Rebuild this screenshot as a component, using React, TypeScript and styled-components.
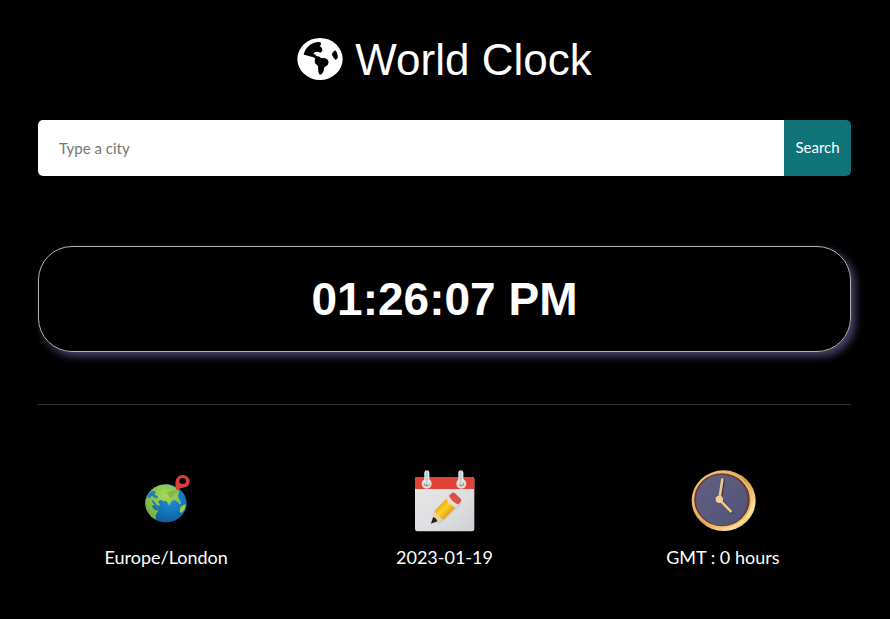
import React, { FormEvent, useState } from "react";
import styled, { createGlobalStyle } from "styled-components";

const GlobalStyle = createGlobalStyle`
  *, *::before, *::after { box-sizing: border-box; }
  body { margin: 0; background: #000; color: #fff; font-family: Lato, sans-serif; }
`;

const Page = styled.main`
  display: flex;
  flex-direction: column;
  padding: 32px 39px 48px 38px;
`;

const Header = styled.header`
  display: flex;
  align-items: center;
  justify-content: center;
  gap: 12px;
  height: 56px;
`;

const GlobeIcon = styled.svg`
  width: 46px;
  height: 42px;
  margin-bottom: 2px;
`;

const Title = styled.h1`
  margin: 0;
  font: 400 44px/56px Arial, "Liberation Sans", sans-serif;
`;

const SearchForm = styled.form`
  display: flex;
  height: 56px;
  margin-top: 32px;
  border-radius: 5px;
  overflow: hidden;
`;

const CityInput = styled.input`
  flex: 1;
  min-width: 0;
  padding: 0 21px;
  border: 0;
  outline: 0;
  background: #fff;
  color: #222;
  font: 400 15px Lato, sans-serif;
  &::placeholder { color: #757575; opacity: 1; }
`;

const SearchButton = styled.button`
  width: 67px;
  padding: 0 0 2px;
  border: 0;
  background: #0f7377;
  color: #fff;
  font: 400 15px Lato, sans-serif;
  cursor: pointer;
`;

const ClockPanel = styled.section`
  display: grid;
  place-items: center;
  height: 106px;
  margin-top: 70px;
  border: 1px solid #b4b4b8;
  border-radius: 34px;
  box-shadow: 4px 4px 8px #4a4870;
`;

const Time = styled.time`
  font: 700 46px/56px Arial, "Liberation Sans", sans-serif;
`;

const Divider = styled.hr`
  width: 100%;
  height: 1px;
  margin: 52px 0 0;
  border: 0;
  background: #303030;
`;

const Details = styled.section`
  display: grid;
  grid-template-columns: repeat(3, 1fr);
  gap: 22px;
  margin-top: 64px;
`;

const Detail = styled.div`
  display: flex;
  flex-direction: column;
  align-items: center;
  gap: 12px;
`;

const Picture = styled.svg`
  width: 70px;
  height: 64px;
`;

const Label = styled.p`
  margin: 0;
  font-size: 18px;
  line-height: 24px;
  white-space: nowrap;
`;

function WorldPicture() {
  return (
    <Picture viewBox="3 27 210 192" aria-hidden="true">
      <defs>
        <radialGradient id="ocean" cx="60%" cy="40%" r="65%">
          <stop offset="0" stopColor="#2190d8" />
          <stop offset="1" stopColor="#0d5c9c" />
        </radialGradient>
        <radialGradient id="land" cx="60%" cy="30%" r="75%">
          <stop offset="0" stopColor="#a8d85a" />
          <stop offset="1" stopColor="#6fae41" />
        </radialGradient>
        <clipPath id="world"><ellipse cx="108" cy="130" rx="62" ry="57" /></clipPath>
      </defs>
      <ellipse cx="108" cy="130" rx="62" ry="57" fill="url(#ocean)" />
      <g clipPath="url(#world)">
        <path fill="url(#land)" d="M66 84 90 74 115 73 138 83 148 94 144 108 149 122 142 127 134 119 124 124 119 137 108 122 99 124 94 119 84 124 90 135 82 145 78 139 70 134 66 140 76 151 85 151 77 166 77 181 62 183 43 151 43 108Z" />
        <path fill="#2580b7" d="m54 103 12-11 13 3-5 9 10 5-2 7-9-3-7-6-7 8-6-2z" />
        <path fill="#1d77b4" d="m66 119 8 8 7 8 8 2-6 6-9-8-9-11z" />
        <path fill="#9ccc4d" d="m76 95 5-3 2 8-5 3zM151 142l9-7 8-2-5 17-9 9-5-4zM148 119l5 9-4 6-4-8z" />
        <path fill="#72ad40" d="m110 98 18-7 15 3-10 8-7 13-8-4z" opacity=".6" />
      </g>
      <path fill="#d93e36" fillRule="evenodd" d="M139 91C136 78 135 66 138 59A21 19 0 1 1 166 82Q151 84 139 91Zm9-28a10 9 0 1 0 20 0 10 9 0 0 0-20 0Z" />
    </Picture>
  );
}

function CalendarPicture() {
  return (
    <Picture viewBox="27 28 210 192" aria-hidden="true">
      <defs>
        <linearGradient id="paper" x2="1" y2="1"><stop stopColor="#e7e7e8" /><stop offset=".6" stopColor="#dedfe1" /><stop offset="1" stopColor="#cecfd2" /></linearGradient>
        <linearGradient id="ring"><stop stopColor="#f6f7f8" /><stop offset=".5" stopColor="#b9c3c9" /><stop offset="1" stopColor="#fff" /></linearGradient>
        <linearGradient id="pencil"><stop stopColor="#f2a90c" /><stop offset=".4" stopColor="#ffd326" /><stop offset="1" stopColor="#e4a111" /></linearGradient>
      </defs>
      <rect x="45" y="52" width="178" height="163" rx="7" fill="url(#paper)" />
      <path fill="#e04336" d="M45 88V59q0-7 7-7h164q7 0 7 7v29z" />
      <g fill="#e4d9d8"><circle cx="80" cy="72" r="15" /><circle cx="184" cy="72" r="15" /></g>
      <g fill="#8e9297"><circle cx="80" cy="72" r="8" /><circle cx="184" cy="72" r="8" /></g>
      <g fill="url(#ring)"><rect x="73" y="32" width="15" height="44" rx="7" /><rect x="175" y="32" width="15" height="44" rx="7" /></g>
      <path d="m100 190 78-61 8 5-65 59z" fill="#b8b9bc" opacity=".35" />
      <g transform="translate(174 108) rotate(44)">
        <path fill="url(#pencil)" d="M-19 30h38v52l-19 28-19-28z" />
        <path fill="#ead0a9" d="m-19 80 10 5 9-3 9 3 10-5-8 18-11 17-11-17z" />
        <path fill="#242220" d="M-9 98Q0 93 9 98L0 117Z" />
        <rect x="-19" y="1" width="38" height="24" rx="9" fill="#df4e49" />
        <path fill="#dedfe1" d="M-19 19Q0 27 19 19v12Q0 38-19 31z" />
      </g>
    </Picture>
  );
}

function ClockPicture() {
  return (
    <Picture viewBox="24 27 210 192" aria-hidden="true">
      <defs>
        <linearGradient id="gold" x2="1" y2="1"><stop stopColor="#ffdd83" /><stop offset=".5" stopColor="#d99a45" /><stop offset=".8" stopColor="#ffe29a" /><stop offset="1" stopColor="#c3843e" /></linearGradient>
        <linearGradient id="face" x2="1" y2="1"><stop stopColor="#626084" /><stop offset="1" stopColor="#505377" /></linearGradient>
      </defs>
      <ellipse cx="131" cy="122" rx="96" ry="91" fill="url(#gold)" />
      <ellipse cx="126" cy="119" rx="86" ry="82" fill="#663d39" stroke="#efbd70" strokeWidth="5" />
      <ellipse cx="125" cy="120" rx="77" ry="76" fill="url(#face)" />
      <path d="M121 119 130 61M121 119 153 156" stroke="#443247" strokeWidth="10" strokeLinecap="round" />
      <path d="M118 118 127 59M118 118 152 154" stroke="#efc889" strokeWidth="8" strokeLinecap="round" />
      <circle cx="118" cy="118" r="11" fill="#f5cf94" />
    </Picture>
  );
}

export default function App() {
  const [city, setCity] = useState("");
  const submit = (event: FormEvent) => event.preventDefault();

  return (
    <>
      <GlobalStyle />
      <Page>
        <Header>
          <GlobeIcon viewBox="17 25 138 126" aria-hidden="true">
            <ellipse cx="86" cy="88" rx="68" ry="63" fill="#fff" />
            <path fill="#000" d="M37 75C42 54 58 40 78 37l10 1 1 6-3 6 6 6 1 8-6 5-7-3-9 1-4 4-1 8-3 3-11-3-10-3Z" />
            <path fill="#000" d="M62 74h9l4 5 10 2 4 4 13 1 7 4 3 7-3 9-10 7-3 13-5 8-6 1-4-8-1-18-9-8-1-10 2-5-9-5Z" />
            <path fill="#000" d="m124 68 8-6q8 9 7 23l-6 6-7-8-4-8Z" />
          </GlobeIcon>
          <Title>World Clock</Title>
        </Header>
        <SearchForm onSubmit={submit}>
          <CityInput aria-label="City" placeholder="Type a city" value={city} onChange={(event) => setCity(event.target.value)} />
          <SearchButton type="submit">Search</SearchButton>
        </SearchForm>
        <ClockPanel aria-label="Current time"><Time dateTime="13:26:07">01:26:07 PM</Time></ClockPanel>
        <Divider />
        <Details aria-label="Time zone details">
          <Detail><WorldPicture /><Label>Europe/London</Label></Detail>
          <Detail><CalendarPicture /><Label>2023-01-19</Label></Detail>
          <Detail><ClockPicture /><Label>GMT : 0 hours</Label></Detail>
        </Details>
      </Page>
    </>
  );
}
